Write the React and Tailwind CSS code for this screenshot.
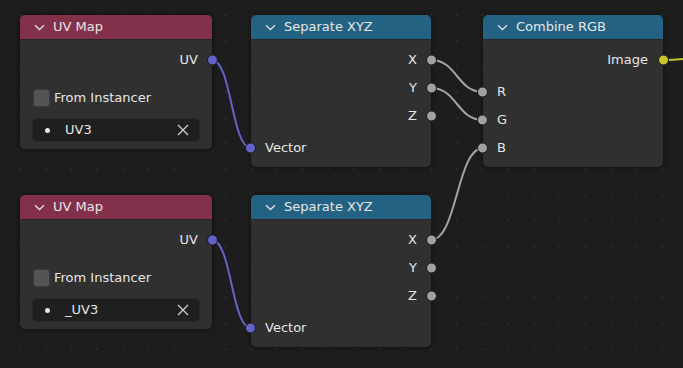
import React from "react";

const FONT = { fontFamily: '"DejaVu Sans", "Liberation Sans", sans-serif' };

function Chevron() {
  return (
    <svg width="11" height="7" viewBox="0 0 11 7" className="shrink-0">
      <path d="M1 1.2 L5.5 5.5 L10 1.2" fill="none" stroke="#e0e0e0" strokeWidth="1.3" />
    </svg>
  );
}

function Socket({ side, color = "#a1a1a1" }) {
  return (
    <span
      className={
        "absolute top-1/2 -translate-y-1/2 w-[11px] h-[11px] rounded-full border border-[#1a1a1a] " +
        (side === "left" ? "-left-[6px]" : "-right-[6px]")
      }
      style={{ backgroundColor: color }}
    />
  );
}

function Header({ title, kind }) {
  return (
    <div
      className={
        "h-[25px] flex items-center gap-[8px] pl-[14px] rounded-t-[5px] text-[13px] text-[#e6e6e6] border-b border-[#262626] " +
        (kind === "input" ? "bg-[#83314a]" : "bg-[#246283]")
      }
    >
      <Chevron />
      <span className="leading-none pb-[1px]">{title}</span>
    </div>
  );
}

function UVMapNode({ top, value }) {
  return (
    <div
      className="absolute left-[20px] w-[192px] h-[134px] rounded-[5px] bg-[#303030] shadow-[0_0_5px_rgba(0,0,0,0.6)] flex flex-col"
      style={{ top }}
    >
      <Header title="UV Map" kind="input" />
      <div className="flex flex-col text-[13px] text-[#e6e6e6]">
        <div className="relative h-[24px] mt-[8px] flex items-center justify-end pr-[14px]">
          <span>UV</span>
          <Socket side="right" color="#6363c7" />
        </div>
        <div className="h-[24px] mt-[14px] flex items-center pl-[13px] gap-[4px]">
          <span className="w-[17px] h-[18px] rounded-[3px] bg-[#545454] border border-[#3a3a3a]" />
          <span>From Instancer</span>
        </div>
        <div className="mt-[8px] mx-[12px] h-[24px] rounded-[4px] bg-[#1f1f1f] border border-[#2a2a2a] flex items-center pl-[12px] pr-[10px]">
          <span className="w-[5px] h-[5px] rounded-full bg-[#e6e6e6]" />
          <span className="ml-[15px] flex-1">{value}</span>
          <svg width="12" height="12" viewBox="0 0 12 12">
            <path d="M1 1 L11 11 M11 1 L1 11" stroke="#cfcfcf" strokeWidth="1.3" />
          </svg>
        </div>
      </div>
    </div>
  );
}

function SeparateNode({ top }) {
  return (
    <div
      className="absolute left-[251px] w-[180px] h-[152px] rounded-[5px] bg-[#303030] shadow-[0_0_5px_rgba(0,0,0,0.6)] flex flex-col"
      style={{ top }}
    >
      <Header title="Separate XYZ" kind="conv" />
      <div className="flex flex-col text-[13px] text-[#e6e6e6] pt-[6px]">
        {["X", "Y", "Z"].map((l) => (
          <div key={l} className="relative h-[28px] flex items-center justify-end pr-[14px]">
            <span>{l}</span>
            <Socket side="right" />
          </div>
        ))}
        <div className="relative h-[28px] mt-[4px] flex items-center pl-[14px]">
          <span>Vector</span>
          <Socket side="left" color="#6363c7" />
        </div>
      </div>
    </div>
  );
}

function CombineNode() {
  return (
    <div className="absolute left-[483px] top-[15px] w-[180px] h-[152px] rounded-[5px] bg-[#303030] shadow-[0_0_5px_rgba(0,0,0,0.6)] flex flex-col">
      <Header title="Combine RGB" kind="conv" />
      <div className="flex flex-col text-[13px] text-[#e6e6e6] pt-[6px]">
        <div className="relative h-[28px] flex items-center justify-end pr-[15px]">
          <span>Image</span>
          <Socket side="right" color="#c7c729" />
        </div>
        <div className="h-[4px]" />
        {["R", "G", "B"].map((l) => (
          <div key={l} className="relative h-[28px] flex items-center pl-[14px]">
            <span>{l}</span>
            <Socket side="left" />
          </div>
        ))}
      </div>
    </div>
  );
}

function link(x1, y1, x2, y2) {
  const h = Math.abs(x2 - x1) * 0.5;
  return `M${x1} ${y1} C${x1 + h} ${y1} ${x2 - h} ${y2} ${x2} ${y2}`;
}

export default function App() {
  return (
    <div className="relative w-[683px] h-[368px] overflow-hidden bg-[#1d1d1d]" style={FONT}>
      <svg className="absolute inset-0" width="683" height="368">
        <defs>
          <pattern id="grid" x="19" y="14" width="25.7" height="25.7" patternUnits="userSpaceOnUse">
            <rect x="0" y="0" width="2" height="2" fill="#2b2b2b" />
          </pattern>
        </defs>
        <rect width="683" height="368" fill="url(#grid)" />
        <g fill="none" strokeWidth="2" strokeLinecap="round">
          <path d={link(212, 60, 251, 148)} stroke="#6464c8" />
          <path d={link(212, 240, 251, 328)} stroke="#6464c8" />
          <path d={link(431, 60, 483, 92)} stroke="#a3a3a3" />
          <path d={link(431, 88, 483, 120)} stroke="#a3a3a3" />
          <path d={link(431, 240, 483, 148)} stroke="#a3a3a3" />
          <path d="M663 60 C690 60 700 56 720 52" stroke="#c7c729" />
        </g>
      </svg>
      <UVMapNode top={15} value="UV3" />
      <UVMapNode top={195} value="_UV3" />
      <SeparateNode top={15} />
      <SeparateNode top={195} />
      <CombineNode />
    </div>
  );
}
